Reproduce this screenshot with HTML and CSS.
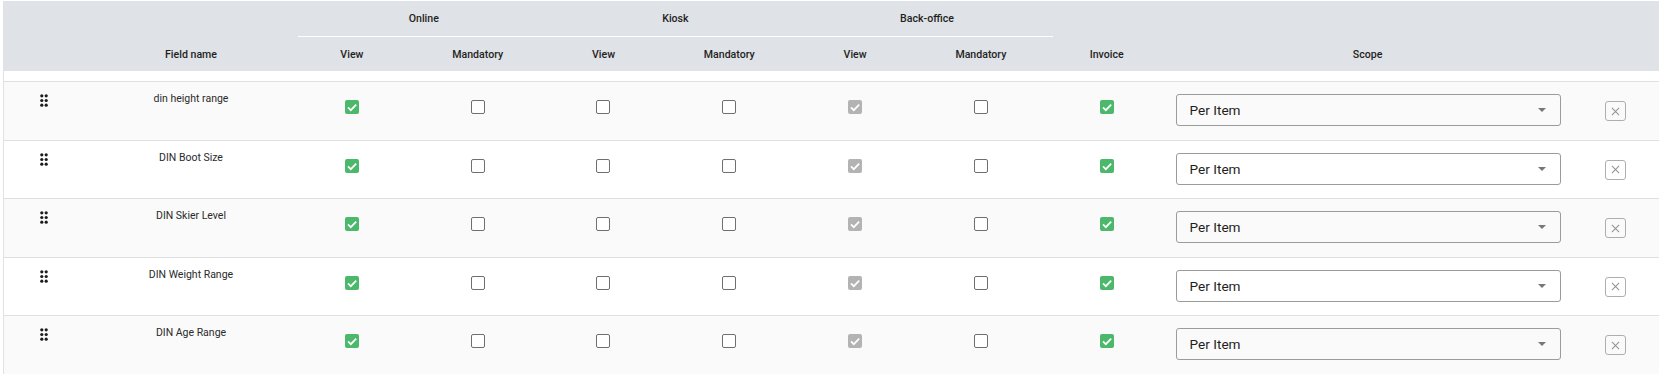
FILE: index.html
```html
<!DOCTYPE html>
<html lang="en">
<head>
    <meta charset="UTF-8">
    <meta name="viewport" content="width=device-width, initial-scale=1.0">
    <title>Custom fields</title>
    <link rel="stylesheet" href="styles.css">
</head>
<body>
  <div class="fields-table">
    <div class="thead">
      <div class="group-row">
        <div class="group g-online">Online</div>
        <div class="group g-kiosk">Kiosk</div>
        <div class="group g-office">Back-office</div>
      </div>
      <div class="sub-row">
        <div></div>
        <div>Field name</div>
        <div>View</div>
        <div>Mandatory</div>
        <div>View</div>
        <div>Mandatory</div>
        <div>View</div>
        <div>Mandatory</div>
        <div>Invoice</div>
        <div>Scope</div>
        <div></div>
      </div>
    </div>

    <div class="tbody">
      <!-- row 1 -->
      <div class="row odd">
        <div class="handle"><svg width="8" height="13" viewBox="0 0 8 13"><circle cx="1.8" cy="1.8" r="1.6"/><circle cx="6.2" cy="1.8" r="1.6"/><circle cx="1.8" cy="6.5" r="1.6"/><circle cx="6.2" cy="6.5" r="1.6"/><circle cx="1.8" cy="11.2" r="1.6"/><circle cx="6.2" cy="11.2" r="1.6"/></svg></div>
        <div class="name">din height range</div>
        <div class="cell"><span class="cb on"><svg viewBox="0 0 14 14"><path d="M3 7.4l2.8 2.8L11.2 4.6"/></svg></span></div>
        <div class="cell"><span class="cb"></span></div>
        <div class="cell"><span class="cb"></span></div>
        <div class="cell"><span class="cb"></span></div>
        <div class="cell"><span class="cb locked"><svg viewBox="0 0 14 14"><path d="M3 7.4l2.8 2.8L11.2 4.6"/></svg></span></div>
        <div class="cell"><span class="cb"></span></div>
        <div class="cell"><span class="cb on"><svg viewBox="0 0 14 14"><path d="M3 7.4l2.8 2.8L11.2 4.6"/></svg></span></div>
        <div class="scope"><div class="select"><span>Per Item</span><i class="caret"></i></div></div>
        <div class="remove"><span class="x-btn"><svg viewBox="0 0 10 10"><path d="M1 1l8 8M9 1l-8 8"/></svg></span></div>
      </div>
      <!-- row 2 -->
      <div class="row">
        <div class="handle"><svg width="8" height="13" viewBox="0 0 8 13"><circle cx="1.8" cy="1.8" r="1.6"/><circle cx="6.2" cy="1.8" r="1.6"/><circle cx="1.8" cy="6.5" r="1.6"/><circle cx="6.2" cy="6.5" r="1.6"/><circle cx="1.8" cy="11.2" r="1.6"/><circle cx="6.2" cy="11.2" r="1.6"/></svg></div>
        <div class="name">DIN Boot Size</div>
        <div class="cell"><span class="cb on"><svg viewBox="0 0 14 14"><path d="M3 7.4l2.8 2.8L11.2 4.6"/></svg></span></div>
        <div class="cell"><span class="cb"></span></div>
        <div class="cell"><span class="cb"></span></div>
        <div class="cell"><span class="cb"></span></div>
        <div class="cell"><span class="cb locked"><svg viewBox="0 0 14 14"><path d="M3 7.4l2.8 2.8L11.2 4.6"/></svg></span></div>
        <div class="cell"><span class="cb"></span></div>
        <div class="cell"><span class="cb on"><svg viewBox="0 0 14 14"><path d="M3 7.4l2.8 2.8L11.2 4.6"/></svg></span></div>
        <div class="scope"><div class="select"><span>Per Item</span><i class="caret"></i></div></div>
        <div class="remove"><span class="x-btn"><svg viewBox="0 0 10 10"><path d="M1 1l8 8M9 1l-8 8"/></svg></span></div>
      </div>
      <!-- row 3 -->
      <div class="row odd">
        <div class="handle"><svg width="8" height="13" viewBox="0 0 8 13"><circle cx="1.8" cy="1.8" r="1.6"/><circle cx="6.2" cy="1.8" r="1.6"/><circle cx="1.8" cy="6.5" r="1.6"/><circle cx="6.2" cy="6.5" r="1.6"/><circle cx="1.8" cy="11.2" r="1.6"/><circle cx="6.2" cy="11.2" r="1.6"/></svg></div>
        <div class="name">DIN Skier Level</div>
        <div class="cell"><span class="cb on"><svg viewBox="0 0 14 14"><path d="M3 7.4l2.8 2.8L11.2 4.6"/></svg></span></div>
        <div class="cell"><span class="cb"></span></div>
        <div class="cell"><span class="cb"></span></div>
        <div class="cell"><span class="cb"></span></div>
        <div class="cell"><span class="cb locked"><svg viewBox="0 0 14 14"><path d="M3 7.4l2.8 2.8L11.2 4.6"/></svg></span></div>
        <div class="cell"><span class="cb"></span></div>
        <div class="cell"><span class="cb on"><svg viewBox="0 0 14 14"><path d="M3 7.4l2.8 2.8L11.2 4.6"/></svg></span></div>
        <div class="scope"><div class="select"><span>Per Item</span><i class="caret"></i></div></div>
        <div class="remove"><span class="x-btn"><svg viewBox="0 0 10 10"><path d="M1 1l8 8M9 1l-8 8"/></svg></span></div>
      </div>
      <!-- row 4 -->
      <div class="row">
        <div class="handle"><svg width="8" height="13" viewBox="0 0 8 13"><circle cx="1.8" cy="1.8" r="1.6"/><circle cx="6.2" cy="1.8" r="1.6"/><circle cx="1.8" cy="6.5" r="1.6"/><circle cx="6.2" cy="6.5" r="1.6"/><circle cx="1.8" cy="11.2" r="1.6"/><circle cx="6.2" cy="11.2" r="1.6"/></svg></div>
        <div class="name">DIN Weight Range</div>
        <div class="cell"><span class="cb on"><svg viewBox="0 0 14 14"><path d="M3 7.4l2.8 2.8L11.2 4.6"/></svg></span></div>
        <div class="cell"><span class="cb"></span></div>
        <div class="cell"><span class="cb"></span></div>
        <div class="cell"><span class="cb"></span></div>
        <div class="cell"><span class="cb locked"><svg viewBox="0 0 14 14"><path d="M3 7.4l2.8 2.8L11.2 4.6"/></svg></span></div>
        <div class="cell"><span class="cb"></span></div>
        <div class="cell"><span class="cb on"><svg viewBox="0 0 14 14"><path d="M3 7.4l2.8 2.8L11.2 4.6"/></svg></span></div>
        <div class="scope"><div class="select"><span>Per Item</span><i class="caret"></i></div></div>
        <div class="remove"><span class="x-btn"><svg viewBox="0 0 10 10"><path d="M1 1l8 8M9 1l-8 8"/></svg></span></div>
      </div>
      <!-- row 5 -->
      <div class="row odd">
        <div class="handle"><svg width="8" height="13" viewBox="0 0 8 13"><circle cx="1.8" cy="1.8" r="1.6"/><circle cx="6.2" cy="1.8" r="1.6"/><circle cx="1.8" cy="6.5" r="1.6"/><circle cx="6.2" cy="6.5" r="1.6"/><circle cx="1.8" cy="11.2" r="1.6"/><circle cx="6.2" cy="11.2" r="1.6"/></svg></div>
        <div class="name">DIN Age Range</div>
        <div class="cell"><span class="cb on"><svg viewBox="0 0 14 14"><path d="M3 7.4l2.8 2.8L11.2 4.6"/></svg></span></div>
        <div class="cell"><span class="cb"></span></div>
        <div class="cell"><span class="cb"></span></div>
        <div class="cell"><span class="cb"></span></div>
        <div class="cell"><span class="cb locked"><svg viewBox="0 0 14 14"><path d="M3 7.4l2.8 2.8L11.2 4.6"/></svg></span></div>
        <div class="cell"><span class="cb"></span></div>
        <div class="cell"><span class="cb on"><svg viewBox="0 0 14 14"><path d="M3 7.4l2.8 2.8L11.2 4.6"/></svg></span></div>
        <div class="scope"><div class="select"><span>Per Item</span><i class="caret"></i></div></div>
        <div class="remove"><span class="x-btn"><svg viewBox="0 0 10 10"><path d="M1 1l8 8M9 1l-8 8"/></svg></span></div>
      </div>
    </div>
  </div>
</body>
</html>
```

FILE: styles.css
```css
body {
    font-family: Roboto, "Liberation Sans", sans-serif;
    margin: 0;
    padding: 0;
    background-color: #fff;
    color: #222;
}
.fields-table {
    margin: 1px 0 0 3px;
    width: 1656px;
}
/* Cabecera gris */
.thead {
    background-color: #dfe2e6;
    font-size: 10.6px;
    font-weight: 500;
    color: #1f1f1f;
}
.group-row,
.sub-row,
.row {
    display: grid;
    grid-template-columns: 90px 196px repeat(7, 125.8px) 396px 1fr;
}
.group-row {
    height: 36px;
    padding-left: 9px;
}
.group {
    grid-column: span 2;
    display: flex;
    align-items: center;
    justify-content: center;
    border-bottom: 1px solid #fff;
    padding-bottom: 1px;
}
.g-online {
    grid-column: 3 / span 2;
}
.sub-row {
    height: 34px;
    align-items: center;
    text-align: center;
}
.tbody {
    padding-top: 10px;
    box-shadow: inset 1px 0 0 #e2e2e2;
}
.row {
    box-sizing: border-box;
    height: 58.6px;
    border-top: 1px solid #e0e0e0;
    background-color: #fff;
    box-shadow: inset 1px 0 0 #e2e2e2;
    align-items: start;
    font-size: 10.5px;
}
.row.odd {
    background-color: #fafafa;
}
.handle {
    padding: 12px 0 0 37px;
}
.handle svg {
    display: block;
    fill: #1c1c1c;
}
.name {
    padding-top: 10px;
    line-height: 14px;
    text-align: center;
    color: #2a2a2a;
}
.cell {
    display: flex;
    justify-content: center;
    padding-top: 18px;
}
.cb {
    box-sizing: border-box;
    width: 14px;
    height: 14px;
    border: 1px solid #6f6f6f;
    border-radius: 2px;
    background-color: #fff;
}
.cb svg {
    display: none;
}
.cb.on,
.cb.locked {
    border: none;
    background-color: #4cb86b;
}
.cb.locked {
    background-color: #b3b3b3;
}
.cb.on svg,
.cb.locked svg {
    display: block;
    width: 14px;
    height: 14px;
    fill: none;
    stroke: #fff;
    stroke-width: 1.7;
}
.scope {
    padding: 12px 5px 0 6px;
}
.select {
    box-sizing: border-box;
    height: 32px;
    border: 1px solid #9b9b9b;
    border-radius: 3px;
    display: flex;
    align-items: center;
    justify-content: space-between;
    padding: 0 14px 0 13px;
    font-size: 13.6px;
    color: #1e1e1e;
}
.caret {
    width: 0;
    height: 0;
    border-left: 4px solid transparent;
    border-right: 4px solid transparent;
    border-top: 4px solid #777;
}
.remove {
    display: flex;
    justify-content: center;
    padding: 19px 0 0 7px;
}
.x-btn {
    box-sizing: border-box;
    width: 21px;
    height: 20px;
    border: 1px solid #aeaeae;
    border-radius: 3px;
    display: flex;
    align-items: center;
    justify-content: center;
}
.x-btn svg {
    width: 9px;
    height: 9px;
    stroke: #959595;
    stroke-width: 1.2;
}
```
